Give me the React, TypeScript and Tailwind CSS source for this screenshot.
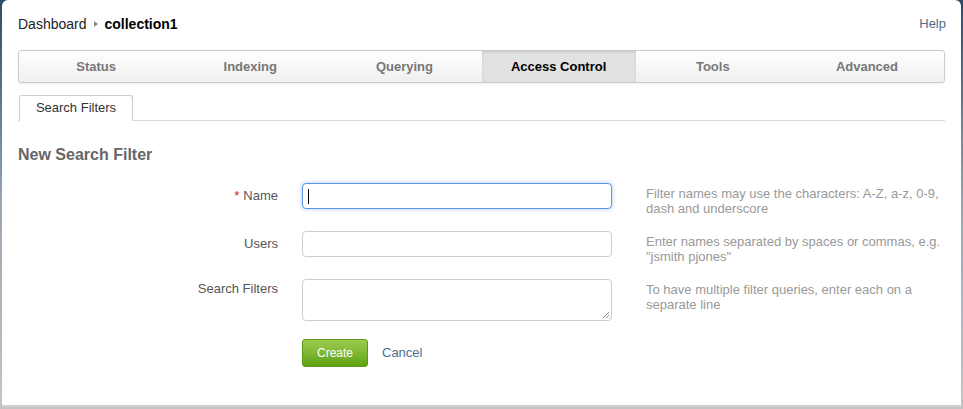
import React from "react";

const tabs = ["Status", "Indexing", "Querying", "Access Control", "Tools", "Advanced"];

const Field = ({
  label,
  required,
  help,
  labelPad,
  rowClass,
  children,
}: {
  label: string;
  required?: boolean;
  help: React.ReactNode;
  labelPad: string;
  rowClass: string;
  children: React.ReactNode;
}) => (
  <div className={`flex items-start ${rowClass}`}>
    <div className={`w-[260px] shrink-0 text-right text-[13px] text-[#555] leading-[16px] ${labelPad}`}>
      {required && <span className="text-[#c0262c] mr-[4px]">*</span>}
      {label}
    </div>
    <div className="ml-[24px] w-[310px] shrink-0">{children}</div>
    <div className="ml-[34px] w-[310px] text-[13px] leading-[15px] text-[#999] pt-[3px]">{help}</div>
  </div>
);

export default function App() {
  return (
    <div
      className="w-[963px] h-[409px] bg-gradient-to-b from-[#2c4a6a] via-[#9aa7b4] to-[#c4c4c4] px-[2px] pb-[2px]"
      style={{ fontFamily: '"Liberation Sans", Arial, sans-serif' }}
    >
      <div className="h-full bg-white rounded-t-[6px] border-b-[2px] border-[#cfcfcf] px-[16px] pt-[14px]">
        <div className="flex items-center justify-between h-[20px]">
          <div className="flex items-center text-[14px] text-[#222]">
            <span>Dashboard</span>
            <svg width="10" height="10" viewBox="0 0 10 10" className="mx-[4px]">
              <path d="M3 2 L7 5 L3 8 Z" fill="#888" />
            </svg>
            <span className="font-bold text-black">collection1</span>
          </div>
          <a className="text-[13px] text-[#4d6d8e] mr-[-1px]">Help</a>
        </div>

        <div className="mt-[16px] flex h-[33px] rounded-[3px] border border-[#cccccc] bg-gradient-to-b from-white to-[#efefef] shadow-[0_1px_2px_rgba(0,0,0,0.08)] overflow-hidden">
          {tabs.map((t) => {
            const active = t === "Access Control";
            return (
              <div
                key={t}
                className={
                  active
                    ? "flex-1 flex items-center justify-center text-[13px] font-bold text-black bg-[#e2e2e2] shadow-[inset_0_1px_3px_rgba(0,0,0,0.12)]"
                    : "flex-1 flex items-center justify-center text-[13px] font-bold text-[#777]"
                }
              >
                {t}
              </div>
            );
          })}
        </div>

        <div className="mt-[12px] flex border-b border-[#d8d8d8] h-[26px]">
          <div className="ml-[1px] w-[114px] h-[26px] -mb-px border border-b-white border-[#cccccc] rounded-t-[3px] bg-white flex items-center justify-center text-[13px] text-[#333]">
            Search Filters
          </div>
        </div>

        <h2 className="mt-[24px] text-[16px] leading-[20px] font-bold text-[#666]">New Search Filter</h2>

        <div className="mt-[18px] flex flex-col">
          <Field
            label="Name"
            required
            labelPad="pt-[5px]"
            rowClass="h-[48px]"
            help={<>Filter names may use the characters: A-Z, a-z, 0-9,<br />dash and underscore</>}
          >
            <div className="h-[26px] rounded-[4px] border border-[#5b93e8] shadow-[0_0_5px_rgba(82,140,232,0.45)] bg-white flex items-center pl-[5px]">
              <div className="w-px h-[15px] bg-black" />
            </div>
          </Field>
          <Field
            label="Users"
            labelPad="pt-[5px]"
            rowClass="h-[48px]"
            help={<>Enter names separated by spaces or commas, e.g.<br />"jsmith pjones"</>}
          >
            <div className="h-[26px] rounded-[4px] border border-[#cccccc] bg-white" />
          </Field>
          <Field
            label="Search Filters"
            labelPad="pt-[2px]"
            rowClass="h-[42px]"
            help={<>To have multiple filter queries, enter each on a<br />separate line</>}
          >
            <div className="relative h-[42px] rounded-[4px] border border-[#cccccc] bg-white">
              <svg width="8" height="8" viewBox="0 0 8 8" className="absolute right-[1px] bottom-[1px]">
                <path d="M7 1 L1 7 M7 4 L4 7 M7 6.5 L6.5 7" stroke="#777" strokeWidth="0.8" />
              </svg>
            </div>
          </Field>
        </div>

        <div className="mt-[18px] ml-[284px] flex items-center">
          <button className="w-[66px] h-[28px] rounded-[3px] border border-[#5a9a18] bg-gradient-to-b from-[#9ccc4e] to-[#5ea30c] text-white text-[12px]">
            Create
          </button>
          <a className="ml-[14px] text-[13px] text-[#4d6d8e]">Cancel</a>
        </div>
      </div>
    </div>
  );
}
